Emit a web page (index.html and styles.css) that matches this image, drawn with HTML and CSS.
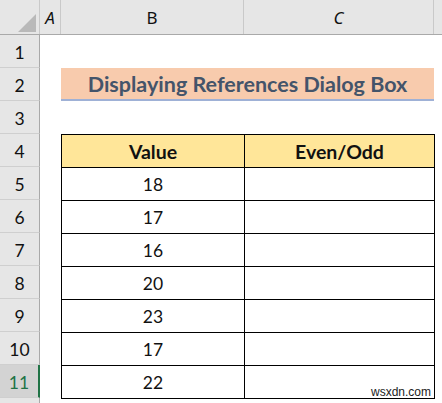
FILE: index.html
```html
<!DOCTYPE html>
<html>
<head>
<meta charset="utf-8">
<link rel="stylesheet" href="styles.css">
</head>
<body>
<div class="sheet">
  <div class="colheads">
    <div class="corner">
      <svg width="39" height="35" viewBox="0 0 39 35"><polygon points="18,32 36,14 36,32" fill="#b9b9b9"/></svg>
    </div>
    <div class="ch ch-a">A</div>
    <div class="ch ch-b">B</div>
    <div class="ch ch-c">C</div>
    <div class="ch ch-rest"></div>
  </div>
  <div class="grid-body">
    <div class="rowheads">
      <div class="rh">1</div>
      <div class="rh">2</div>
      <div class="rh">3</div>
      <div class="rh">4</div>
      <div class="rh">5</div>
      <div class="rh">6</div>
      <div class="rh">7</div>
      <div class="rh">8</div>
      <div class="rh">9</div>
      <div class="rh">10</div>
      <div class="rh rh-sel">11</div>
      <div class="rh rh-end"></div>
    </div>
    <div class="cells">
      <div class="row"></div>
      <div class="row"><div class="title">Displaying References Dialog Box</div></div>
      <div class="row"></div>
      <table class="data">
        <thead>
          <tr><th class="col-b">Value</th><th class="col-c">Even/Odd</th></tr>
        </thead>
        <tbody>
          <tr><td>18</td><td></td></tr>
          <tr><td>17</td><td></td></tr>
          <tr><td>16</td><td></td></tr>
          <tr><td>20</td><td></td></tr>
          <tr><td>23</td><td></td></tr>
          <tr><td>17</td><td></td></tr>
          <tr><td>22</td><td class="wm-cell"><span class="watermark">wsxdn.com</span></td></tr>
        </tbody>
      </table>
    </div>
  </div>
</div>
</body>
</html>
```

FILE: styles.css
```css
* { box-sizing: border-box; }
html, body { margin: 0; padding: 0; background: #fff; }
body { font-family: Lato, "Open Sans", sans-serif; width: 442px; height: 403px; overflow: hidden; }

.sheet { display: flex; flex-direction: column; width: 442px; }

.colheads { display: flex; height: 35px; background: #e6e6e6; border-bottom: 1px solid #a9a9a9; }
.corner { width: 40px; flex: none; border-right: 1px solid #c9c9c9; display: flex; }
.ch {
  height: 34px; flex: none; display: flex; align-items: center; justify-content: center;
  font-size: 17px; color: #111; border-right: 1px solid #c9c9c9;
  font-family: "Noto Sans", sans-serif;
}
.ch-a { width: 21px; font-style: italic; }
.ch-b { width: 183px; }
.ch-c { width: 190px; font-style: italic; }
.ch-rest { flex: 1; border-right: none; }

.grid-body { display: flex; }
.rowheads { width: 40px; flex: none; display: flex; flex-direction: column; }
.rh {
  height: 33px; background: #e6e6e6; border-bottom: 1px solid #cfcfcf; border-right: 1px solid #a9a9a9;
  display: flex; align-items: center; justify-content: center; font-size: 17.5px; color: #111; padding-top: 2px;
}
.rh-sel { background: #d3d3d3; color: #217346; border-right: 2px solid #217346; }
.rh-end { height: 5px; border-bottom: none; padding: 0; }

.cells { flex: 1; padding-left: 21px; }
.row { height: 33px; }
.title {
  width: 373px; height: 33px; background: #f8cbad; border-bottom: 2px solid #9fb1d6;
  color: #44546a; font-weight: 700; font-size: 21.5px; display: flex; align-items: center; justify-content: center;
  padding-top: 1px;
}

.data { border-collapse: collapse; width: 373px; table-layout: fixed; }
.data th, .data td { border: 1px solid #000; height: 33px; padding: 0; text-align: center; font-size: 17.5px; color: #111; }
.data th { background: #ffe699; font-weight: 700; font-size: 19.5px; }
.col-b { width: 183px; }
.col-c { width: 190px; }
.wm-cell { position: relative; }
.watermark {
  position: absolute; right: 3px; bottom: 0; font-family: "Liberation Sans", sans-serif;
  font-size: 12px; color: #222; line-height: 12px;
}
```
